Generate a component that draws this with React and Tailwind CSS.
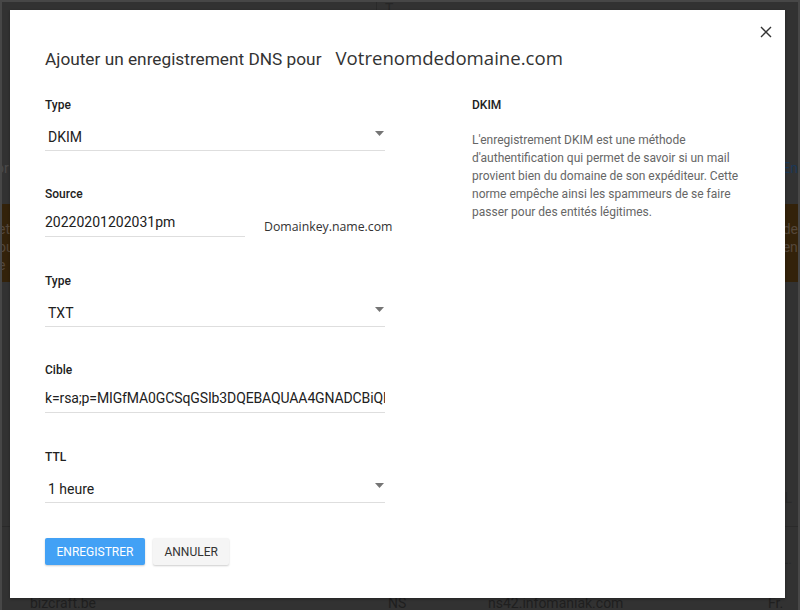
export default function App() {
  const roboto = { fontFamily: "Roboto, 'Liberation Sans', sans-serif" };
  const label = "text-[12px] leading-[16px] font-medium text-[#212121]";
  const Caret = () => (
    <svg width="9" height="5" viewBox="0 0 9 5" className="absolute right-[1px] top-[10px]">
      <path d="M0 0 L9 0 L4.5 5 Z" fill="#757575" />
    </svg>
  );
  const Select = ({ value }) => (
    <div className="relative w-[340px] pl-[3px] pt-[6px] pb-[3px] text-[14px] leading-[20px] text-[#212121] border-b border-[#dedede]">
      {value}
      <Caret />
    </div>
  );
  return (
    <div style={roboto} className="relative w-[800px] h-[610px] overflow-hidden bg-[#323232] border-l-2 border-r-2 border-t-2 border-[#474747]">
      {/* dimmed page behind the dialog */}
      <div className="flex flex-col">
        <div className="h-[20px] flex">
          <div className="w-[374px]" />
          <div className="w-px h-[20px] bg-[#2a2a2a]" />
          <div className="pl-[8px] text-[14px] leading-[14px] text-[#262626]">T</div>
        </div>
        <div className="mt-[136px] h-[20px] flex justify-between text-[14px] text-[#4a4a4a]">
          <span className="-ml-[6px]">or</span>
          <span className="text-[#1c3857]">En</span>
        </div>
        <div className="mt-[26px] h-[78px] bg-[#33220a] flex justify-between text-[14px] leading-[18px] text-[#54473a] pt-[16px]">
          <div className="-ml-[4px] flex flex-col">
            <span>et</span>
            <span>ou</span>
            <span>e</span>
          </div>
          <div className="flex flex-col pr-[0px]">
            <span>de</span>
            <span>en</span>
          </div>
        </div>
        <div className="mt-[206px] h-[20px] flex justify-end pr-[6px] text-[14px] text-[#2a2a2a]">L</div>
        <div className="mt-[18px] h-px bg-[#2a2a2a]" />
        <div className="mt-[22px] h-[20px] flex justify-end pr-[6px] text-[14px] text-[#2a2a2a]">L.</div>
        <div className="mt-[26px] flex text-[14px] leading-[16px] text-[#1f1f1f]">
          <span className="ml-[28px] w-[358px]">bizcraft.be</span>
          <span className="w-[100px]">NS</span>
          <span className="w-[280px]">ns42.infomaniak.com</span>
          <span>Fr.</span>
        </div>
      </div>

      {/* dialog */}
      <div className="absolute left-[8px] top-[8px] w-[775px] h-[588px] bg-white shadow-[0_1px_3px_rgba(0,0,0,0.3)] pl-[35px] pt-[36px]">
        <button className="absolute left-[748px] top-[14px] w-[16px] h-[16px] flex items-center justify-center">
          <svg width="12" height="12" viewBox="0 0 12 12">
            <path d="M1 1 L11 11 M11 1 L1 11" stroke="#333" strokeWidth="1.4" />
          </svg>
        </button>
        <div className="flex items-baseline h-[24px]">
          <span className="text-[17.25px] leading-[24px] text-[#333]">Ajouter un enregistrement DNS pour</span>
          <span style={{ fontFamily: "'Open Sans', 'Noto Sans', sans-serif" }} className="ml-[14px] text-[18.6px] leading-[24px] text-[#333]">
            Votrenomdedomaine.com
          </span>
        </div>
        <div className="flex mt-[27px]">
          <div className="w-[340px] flex flex-col">
            <div className={label}>Type</div>
            <div className="mt-[8px]"><Select value="DKIM" /></div>

            <div className={`${label} mt-[35px]`}>Source</div>
            <div className="mt-[4px] flex items-center">
              <div className="w-[200px] shrink-0 pt-[6px] pb-[4px] text-[14px] leading-[20px] text-[#212121] border-b border-[#dedede]">
                20220201202031pm
              </div>
              <div style={{ fontFamily: "'Open Sans', 'Noto Sans', sans-serif" }} className="ml-[19px] mt-[11px] shrink-0 text-[12.3px] text-[#333] whitespace-nowrap">
                Domainkey.name.com
              </div>
            </div>

            <div className={`${label} mt-[36px]`}>Type</div>
            <div className="mt-[8px]"><Select value="TXT" /></div>

            <div className={`${label} mt-[35px]`}>Cible</div>
            <div className="mt-[4px] w-[340px] overflow-hidden whitespace-nowrap pt-[6px] pb-[4px] text-[14px] leading-[20px] tracking-[-0.12px] text-[#212121] border-b border-[#dedede]">
              k=rsa;p=MIGfMA0GCSqGSIb3DQEBAQUAA4GNADCBiQKBgQDx
            </div>

            <div className={`${label} mt-[36px]`}>TTL</div>
            <div className="mt-[8px]"><Select value="1 heure" /></div>

            <div className="mt-[35px] flex gap-[8px]">
              <button className="h-[27px] px-[11.5px] rounded-[2px] bg-[#42a1f5] text-white text-[12px] shadow-[0_1px_2px_rgba(0,0,0,0.2)]">
                ENREGISTRER
              </button>
              <button className="h-[27px] px-[11.5px] rounded-[2px] bg-[#f5f5f5] text-[#333] text-[12px] shadow-[0_1px_2px_rgba(0,0,0,0.2)]">
                ANNULER
              </button>
            </div>
          </div>
          <div className="ml-[87px] w-[280px] flex flex-col">
            <div className={label}>DKIM</div>
            <p className="mt-[18px] text-[12px] leading-[18px] text-[#666]">
              L'enregistrement DKIM est une méthode<br />
              d'authentification qui permet de savoir si un mail<br />
              provient bien du domaine de son expéditeur. Cette<br />
              norme empêche ainsi les spammeurs de se faire<br />
              passer pour des entités légitimes.
            </p>
          </div>
        </div>
      </div>
    </div>
  );
}
